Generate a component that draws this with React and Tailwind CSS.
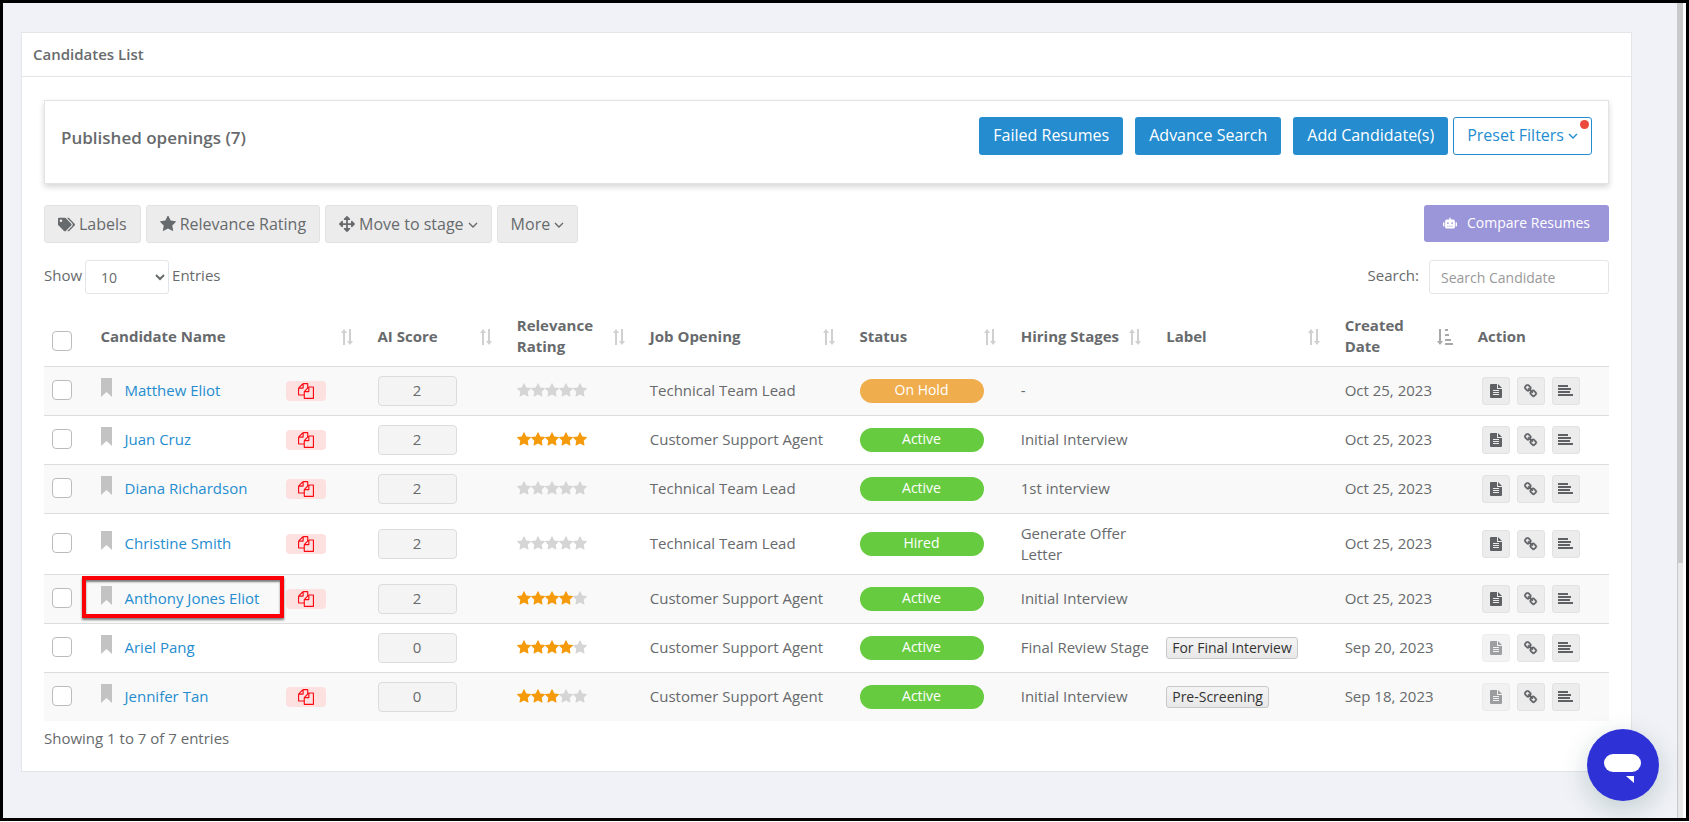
import { FaArrowsAlt, FaRobot, FaTags } from "react-icons/fa"

const candidates = [
  { name: "Matthew Eliot", duplicate: true, score: 2, rating: 0, job: "Technical Team Lead", status: "On Hold", stage: "-", label: "", date: "Oct 25, 2023", resume: true },
  { name: "Juan Cruz", duplicate: true, score: 2, rating: 5, job: "Customer Support Agent", status: "Active", stage: "Initial Interview", label: "", date: "Oct 25, 2023", resume: true },
  { name: "Diana Richardson", duplicate: true, score: 2, rating: 0, job: "Technical Team Lead", status: "Active", stage: "1st interview", label: "", date: "Oct 25, 2023", resume: true },
  { name: "Christine Smith", duplicate: true, score: 2, rating: 0, job: "Technical Team Lead", status: "Hired", stage: "Generate Offer Letter", label: "", date: "Oct 25, 2023", resume: true },
  { name: "Anthony Jones Eliot", duplicate: true, score: 2, rating: 4, job: "Customer Support Agent", status: "Active", stage: "Initial Interview", label: "", date: "Oct 25, 2023", resume: true, highlighted: true },
  { name: "Ariel Pang", duplicate: false, score: 0, rating: 4, job: "Customer Support Agent", status: "Active", stage: "Final Review Stage", label: "For Final Interview", date: "Sep 20, 2023", resume: false },
  { name: "Jennifer Tan", duplicate: true, score: 0, rating: 3, job: "Customer Support Agent", status: "Active", stage: "Initial Interview", label: "Pre-Screening", date: "Sep 18, 2023", resume: false },
]

const columns = [
  { title: "Candidate Name", width: "w-[17.7%]" },
  { title: "AI Score", width: "w-[8.9%]" },
  { title: "Relevance Rating", width: "w-[8.5%]" },
  { title: "Job Opening", width: "w-[13.4%]" },
  { title: "Status", width: "w-[10.3%]" },
  { title: "Hiring Stages", width: "w-[9.3%]" },
  { title: "Label", width: "w-[11.4%]" },
  { title: "Created Date", width: "w-[8.5%]", sorted: true },
]

function SortIcon({ sorted }) {
  if (sorted) {
    return (
      <svg width="16" height="18" viewBox="0 0 16 18" className="mt-0.5 shrink-0 fill-[#a9a9a9]">
        <path d="M2 1h2v12h2l-3 4-3-4h2zM8 1h3v2H8zM8 6h4v2H8zM8 11h6v2H8zM8 15h8v2H8z" />
      </svg>
    )
  }
  return (
    <svg width="12" height="18" viewBox="0 0 12 18" className="mt-0.5 shrink-0 fill-[#d0d0d0]">
      <path d="M3 1l3 4H4v12H2V5H0zM8 1h2v12h2l-3 4-3-4h2z" />
    </svg>
  )
}

function BookmarkIcon() {
  return (
    <svg width="11" height="20" viewBox="0 0 11 20" className="mb-[5px] fill-[#c3c3c3]">
      <path d="M0 0h11v19l-5.5-5L0 19z" />
    </svg>
  )
}

function CopyIcon() {
  return (
    <svg width="16" height="16" viewBox="0 0 1792 1792" className="fill-[#fb0a12]">
      <path d="M1696 384q40 0 68 28t28 68v1216q0 40-28 68t-68 28h-960q-40 0-68-28t-28-68v-288h-544q-40 0-68-28t-28-68v-672q0-40 20-88t48-76l408-408q28-28 76-48t88-20h416q40 0 68 28t28 68v328q68-40 128-40h416zm-544 213l-299 299h299v-299zm-640-384l-299 299h299v-299zm196 647l316-316v-416h-384v416q0 40-28 68t-68 28h-416v640h512v-256q0-40 20-88t48-76zm956 804v-1152h-384v416q0 40-28 68t-68 28h-416v640h896z" />
    </svg>
  )
}

function FileIcon() {
  return (
    <svg width="12" height="14" viewBox="0 0 12 14" className="fill-current">
      <path fillRule="evenodd" d="M1 0h6v5h5v8a1 1 0 0 1-1 1H1a1 1 0 0 1-1-1V1a1 1 0 0 1 1-1zM3 6v1h6V6zM3 8v1h6V8zM3 10v1h6v-1z" />
      <path d="M8 0l4 4H8z" />
    </svg>
  )
}

function LinkIcon() {
  return (
    <svg width="14" height="14" viewBox="0 0 1792 1792" className="fill-current stroke-current stroke-[50]">
      <path d="M1456 1216q0-40-28-68l-208-208q-28-28-68-28-42 0-72 32 3 3 19 18.5t21.5 21.5 15 19 13 25.5 3.5 27.5q0 40-28 68t-68 28q-15 0-27.5-3.5t-25.5-13-19-15-21.5-21.5-18.5-19q-33 31-33 73 0 40 28 68l206 207q27 27 68 27 40 0 68-26l147-146q28-28 28-67zm-703-705q0-40-28-68l-206-207q-28-28-68-28-39 0-68 27l-147 146q-28 28-28 67 0 40 28 68l208 208q27 27 68 27 42 0 72-31-3-3-19-18.5t-21.5-21.5-15-19-13-25.5-3.5-27.5q0-40 28-68t68-28q15 0 27.5 3.5t25.5 13 19 15 21.5 21.5 18.5 19q33-31 33-73zm895 705q0 120-85 203l-147 146q-83 83-203 83-121 0-204-85l-206-207q-83-83-83-203 0-123 88-209l-88-88q-86 88-208 88-120 0-204-84l-208-208q-84-84-84-204t85-203l147-146q83-83 203-83 121 0 204 85l206 207q83 83 83 203 0 123-88 209l88 88q86-88 208-88 120 0 204 84l208 208q84 84 84 204z" />
    </svg>
  )
}

function AlignIcon() {
  return (
    <svg width="15" height="11" viewBox="0 0 15 11" className="fill-current">
      <path d="M0 0h10v2H0zM0 3h13v2H0zM0 6h12v2H0zM0 9h15v2H0z" />
    </svg>
  )
}

function StarIcon({ className }) {
  return (
    <svg viewBox="64 64 1664 1664" className={`fill-current ${className}`}>
      <path d="M1728 647q0 22-26 48l-363 354 86 500q1 7 1 20 0 21-10.5 35.5t-30.5 14.5q-19 0-40-12l-449-236-449 236q-22 12-40 12-21 0-31.5-14.5t-10.5-35.5q0-6 2-20l86-500-364-354q-25-27-25-48 0-37 56-46l502-73 225-455q19-41 49-41t49 41l225 455 502 73q56 9 56 46z" />
    </svg>
  )
}

function AngleDown() {
  return (
    <svg width="10" height="6" viewBox="0 0 10 6" className="mt-0.5 fill-none stroke-current stroke-[1.4]">
      <path d="M1 1l4 4 4-4" />
    </svg>
  )
}

function ActionButton({ label, disabled, children }) {
  return (
    <button
      type="button"
      aria-label={label}
      disabled={disabled}
      className="flex h-7 w-7 items-center justify-center rounded-[3px] border border-[#e2e2e2] bg-[#ececec] text-[#5f6164] disabled:opacity-60"
    >
      {children}
    </button>
  )
}

function ToolbarButton({ children }) {
  return (
    <button type="button" className="flex h-[38px] items-center gap-1 rounded-[3px] border border-[#e2e2e2] bg-[#ececec] px-[13px] text-base text-[#676a6c]">
      {children}
    </button>
  )
}

function PrimaryButton({ children }) {
  return (
    <button type="button" className="h-[38px] rounded-[3px] bg-[#258dcf] px-3.5 pb-0.5 text-base text-white">
      {children}
    </button>
  )
}

function Stars({ rating }) {
  return (
    <div role="img" aria-label={`${rating} out of 5`} className="flex">
      {[1, 2, 3, 4, 5].map((n) => (
        <StarIcon key={n} className={`h-[15px] w-[14px] ${n <= rating ? "text-[#f59b0b]" : "text-[#d5d5d5]"}`} />
      ))}
    </div>
  )
}

function Checkbox({ label }) {
  return (
    <input
      type="checkbox"
      aria-label={label}
      className="block h-5 w-5 appearance-none rounded-[4px] border border-[#bcbcbc] bg-white checked:bg-[#258dcf]"
    />
  )
}

function CandidateRow({ candidate }) {
  return (
    <tr className="h-[49px] border-t border-[#dcdddf] odd:bg-[#f9f9f9]">
      <td className="px-2 pb-0.5">
        <Checkbox label={`Select ${candidate.name}`} />
      </td>
      <td className="px-2">
        <div className="relative flex items-center">
          <BookmarkIcon />
          <a href="#candidate" className="ml-[13px] text-[#258dcf]">{candidate.name}</a>
          {candidate.duplicate && (
            <span className="mr-9 ml-auto flex h-5 w-10 items-center justify-center rounded-[4px] bg-[#fde0e0]">
              <CopyIcon />
            </span>
          )}
          {candidate.highlighted && (
            <span className="pointer-events-none absolute -top-[10px] -left-[19px] h-[42px] w-[202px] border-4 border-[#fb0007] shadow-[0_2px_2px_rgba(0,0,0,0.5),inset_0_2px_2px_rgba(0,0,0,0.5)]" />
          )}
        </div>
      </td>
      <td className="px-2">
        <input
          readOnly
          aria-label={`AI score of ${candidate.name}`}
          value={candidate.score}
          className="block h-[30px] w-[79px] rounded-[4px] border border-[#dcdcdc] bg-[#f4f4f4] pb-0.5 text-center"
        />
      </td>
      <td className="px-2">
        <Stars rating={candidate.rating} />
      </td>
      <td className="px-2">{candidate.job}</td>
      <td className="px-2">
        <span className={`block h-6 w-[124px] rounded-full text-center text-sm leading-[22px] text-white ${candidate.status === "On Hold" ? "bg-[#f0ad4e]" : "bg-[#67cb3f]"}`}>
          {candidate.status}
        </span>
      </td>
      <td className="py-[9px] pr-1 pl-2">{candidate.stage}</td>
      <td className="px-2">
        {candidate.label && (
          <span className="inline-block rounded-[3px] border border-[#c9c9c9] bg-linear-to-b from-[#f4f4f4] to-[#e8e8e8] px-[5px] text-sm leading-5 whitespace-nowrap text-[#333]">
            {candidate.label}
          </span>
        )}
      </td>
      <td className="px-2">{candidate.date}</td>
      <td className="px-2">
        <div className="ml-1 flex gap-[7px]">
          <ActionButton label="View resume" disabled={!candidate.resume}><FileIcon /></ActionButton>
          <ActionButton label="Copy link"><LinkIcon /></ActionButton>
          <ActionButton label="View details"><AlignIcon /></ActionButton>
        </div>
      </td>
    </tr>
  )
}

export default function App() {
  return (
    <div className="min-h-screen bg-white pb-px font-['Open_Sans',sans-serif] text-[15px] leading-[21px] text-[#676a6c]">
      <div className="flex min-h-[calc(100vh-1px)] border-3 border-black bg-[#f0f2f7]">
        <main className="min-w-0 flex-1 pt-[29px] pr-[45px] pb-[46px] pl-[18px]">
          <section className="border border-[#e3e5e8] bg-white">
            <h1 className="border-b border-[#e3e5e8] px-[11px] py-[11px] text-[15px] font-semibold">Candidates List</h1>
            <div className="px-[22px] pt-[23px] pb-[22px]">
              <div className="flex items-start justify-between border border-[#e3e3e3] px-4 pt-4 pb-7 shadow-[0_3px_6px_rgba(0,0,0,0.16)]">
                <h2 className="pt-[10px] text-[17px] font-semibold">Published openings (7)</h2>
                <div className="flex">
                  <div className="flex gap-3">
                    <PrimaryButton>Failed Resumes</PrimaryButton>
                    <PrimaryButton>Advance Search</PrimaryButton>
                    <PrimaryButton>Add Candidate(s)</PrimaryButton>
                  </div>
                  <button type="button" className="relative ml-[5px] flex h-[38px] items-center gap-1 rounded-[3px] border border-[#258dcf] bg-white px-[13px] pb-0.5 text-base text-[#258dcf]">
                    Preset Filters
                    <AngleDown />
                    <span className="absolute top-0.5 right-0.5 h-[9px] w-[9px] rounded-full bg-[#ec4b3b]" />
                  </button>
                </div>
              </div>

              <div className="mt-[21px] flex justify-between">
                <div className="flex gap-[5px]">
                  <ToolbarButton><FaTags size={17} /> Labels</ToolbarButton>
                  <ToolbarButton><StarIcon className="h-4 w-4" /> Relevance Rating</ToolbarButton>
                  <ToolbarButton><FaArrowsAlt size={16} /> Move to stage <AngleDown /></ToolbarButton>
                  <ToolbarButton>More <AngleDown /></ToolbarButton>
                </div>
                <button type="button" className="flex h-[37px] items-center gap-[10px] rounded-[3px] bg-[#9b95d9] px-[19px] pb-0.5 text-sm text-white">
                  <FaRobot size={14} />
                  Compare Resumes
                </button>
              </div>

              <div className="mt-[17px] flex items-start justify-between">
                <div className="flex items-start">
                  <label htmlFor="page-size" className="pt-[5px]">Show</label>
                  <select id="page-size" className="mx-[3px] h-[34px] w-[84px] rounded-[3px] border border-[#e3e5e8] bg-white px-[11px] text-sm">
                    <option>10</option>
                    <option>25</option>
                    <option>50</option>
                  </select>
                  <span className="pt-[5px]">Entries</span>
                </div>
                <div className="flex items-start">
                  <label htmlFor="candidate-search" className="pt-[5px]">Search:</label>
                  <input id="candidate-search" type="search" placeholder="Search Candidate" className="ml-[10px] h-[34px] w-[180px] rounded-[3px] border border-[#e3e5e8] px-[11px] text-sm placeholder:text-[#999]" />
                </div>
              </div>

              <table className="mt-[13px] w-full table-fixed text-left">
                <thead>
                  <tr className="h-[59px] font-bold">
                    <th className="w-[3.1%] px-2 pt-[10px]">
                      <Checkbox label="Select all candidates" />
                    </th>
                    {columns.map((column) => (
                      <th key={column.title} className={`px-2 ${column.width}`}>
                        <div className="flex items-center justify-between pr-[9px]">
                          <span>{column.title}</span>
                          <SortIcon sorted={column.sorted} />
                        </div>
                      </th>
                    ))}
                    <th className="px-2">Action</th>
                  </tr>
                </thead>
                <tbody>
                  {candidates.map((candidate) => (
                    <CandidateRow key={candidate.name} candidate={candidate} />
                  ))}
                </tbody>
              </table>
              <p className="mt-[7px]">Showing 1 to 7 of 7 entries</p>
            </div>
          </section>
        </main>
        <div className="w-[9px] bg-white">
          <div className="h-full w-[6px] border-l border-[#c9c9c9] bg-[#e9e9e9]">
            <div className="h-[560px] bg-[#c9c9c9]" />
          </div>
        </div>
      </div>

      <button type="button" aria-label="Open chat" className="fixed right-[30px] bottom-[21px] h-[72px] w-[72px] rounded-full bg-[#2e32d6] shadow-[0_8px_28px_rgba(0,60,60,0.2)]">
        <svg width="72" height="72" viewBox="0 0 72 72" className="fill-white">
          <rect x="17" y="25" width="37" height="18" rx="9" />
          <path d="M39 47h8v7z" />
        </svg>
      </button>
    </div>
  )
}
